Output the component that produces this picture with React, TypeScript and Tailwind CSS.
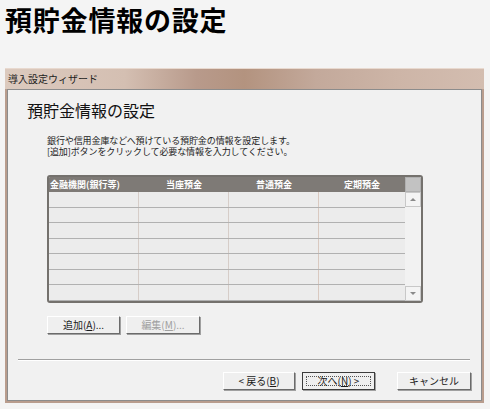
import React from "react";

const jp = { fontFamily: '"Noto Sans CJK JP", "Noto Sans", sans-serif' };

function Btn({
  children,
  w,
  disabled,
  def,
}: {
  children: React.ReactNode;
  w: string;
  disabled?: boolean;
  def?: boolean;
}) {
  return (
    <div
      className={`${w} h-[18px] flex items-center justify-center text-[10px] leading-none border ${
        def ? "border-[#3c3c3c]" : "border-t-[#ffffff] border-l-[#ffffff] border-r-[#6b6b6b] border-b-[#6b6b6b]"
      } bg-[#efefef] shadow-[1px_1px_0_#a0a0a0] ${disabled ? "text-[#a0a0a0]" : "text-[#1a1a1a]"}`}
    >
      {def ? (
        <div className="w-[calc(100%-6px)] h-[calc(100%-6px)] border border-dotted border-[#555] flex items-center justify-center">
          {children}
        </div>
      ) : (
        children
      )}
    </div>
  );
}

export default function App() {
  const rows = [0, 1, 2, 3, 4, 5, 6];
  return (
    <div className="w-[490px] h-[409px] bg-[#f4f4f4] overflow-hidden" style={jp}>
      <h1 className="pl-[5px] pt-[4px] text-[27px] font-bold leading-[32px] text-black tracking-[0.8px]">
        預貯金情報の設定
      </h1>
      <div className="ml-[5px] mt-[32px] w-[479px]">
        {/* title bar */}
        <div className="h-[21px] border-t border-[#e8d9cf] bg-[linear-gradient(90deg,#dccabe_0%,#d4bfb2_25%,#b89a8b_40%,#b3937f_50%,#c3a99b_65%,#cdb5a7_82%,#d3bdb0_100%)] flex items-center pl-[3px]">
          <span className="text-[10px] text-[#1c1c1c] leading-none">導入設定ウィザード</span>
        </div>
        <div className="border-x-2 border-b-2 border-[#b99d8e]">
          <div className="h-[312px] border border-[#8c8c8c] bg-[#f1f1f1] flex flex-col">
            <div className="pl-[19px] pt-[10px] text-[16px] leading-[20px] text-[#111]">預貯金情報の設定</div>
            <div className="pl-[39px] mt-[15px] text-[9px] leading-[11px] text-[#222] tracking-[-0.1px]">
              <div>銀行や信用金庫などへ預けている預貯金の情報を設定します。</div>
              <div>[追加]ボタンをクリックして必要な情報を入力してください。</div>
            </div>
            {/* table */}
            <div className="ml-[39px] mt-[18px] w-[376px] h-[128px] border-2 border-[#74716d] rounded-[3px] flex overflow-hidden bg-[#ececec]">
              <div className="flex-1 flex flex-col">
                <div className="h-[15px] bg-[#7e7a76] flex text-white text-[9px] font-bold leading-none items-center">
                  <div className="w-[90px] pl-[1px]">金融機関(銀行等)</div>
                  <div className="w-[90px] text-center">当座預金</div>
                  <div className="w-[90px] text-center">普通預金</div>
                  <div className="flex-1 text-center">定期預金</div>
                </div>
                {rows.map((r) => (
                  <div key={r} className="h-[15.6px] flex border-b border-[#b1b1b1] bg-[#ececec]">
                    <div className="w-[90px] border-r border-[#d6cdc8]" />
                    <div className="w-[90px] border-r border-[#d6cdc8]" />
                    <div className="w-[90px] border-r border-[#d9c9c0]" />
                    <div className="flex-1" />
                  </div>
                ))}
              </div>
              <div className="w-[16px] flex flex-col bg-[#f2f2f2]">
                <div className="h-[15px] bg-[#c2c2c2] border border-[#b0b0b0]" />
                <div className="h-[15px] border border-[#c8c8c8] bg-[#f4f4f4] flex items-center justify-center">
                  <div className="w-0 h-0 border-x-[3px] border-x-transparent border-b-[3px] border-b-[#8a8a8a]" />
                </div>
                <div className="flex-1" />
                <div className="h-[15px] border border-[#c8c8c8] bg-[#f4f4f4] flex items-center justify-center">
                  <div className="w-0 h-0 border-x-[3px] border-x-transparent border-t-[3px] border-t-[#8a8a8a]" />
                </div>
              </div>
            </div>
            {/* add / edit */}
            <div className="ml-[39px] mt-[13px] flex gap-[6px]">
              <Btn w="w-[73px]">
                <span>
                  追加(<span className="underline">A</span>)...
                </span>
              </Btn>
              <Btn w="w-[74px]" disabled>
                <span>
                  編集(<span className="underline">M</span>)...
                </span>
              </Btn>
            </div>
            <div className="ml-[10px] mt-[25px] w-[452px] h-[2px] border-t border-[#a0a0a0] border-b border-b-[#ffffff]" />
            <div className="mt-[11px] ml-[215px] flex">
              <Btn w="w-[72px]">
                <span>
                  &lt; 戻る(<span className="underline">B</span>)
                </span>
              </Btn>
              <div className="w-[7px]" />
              <Btn w="w-[73px]" def>
                <span>
                  次へ(<span className="underline">N</span>) &gt;
                </span>
              </Btn>
              <div className="w-[22px]" />
              <Btn w="w-[74px]">
                <span>キャンセル</span>
              </Btn>
            </div>
          </div>
        </div>
      </div>
    </div>
  );
}
